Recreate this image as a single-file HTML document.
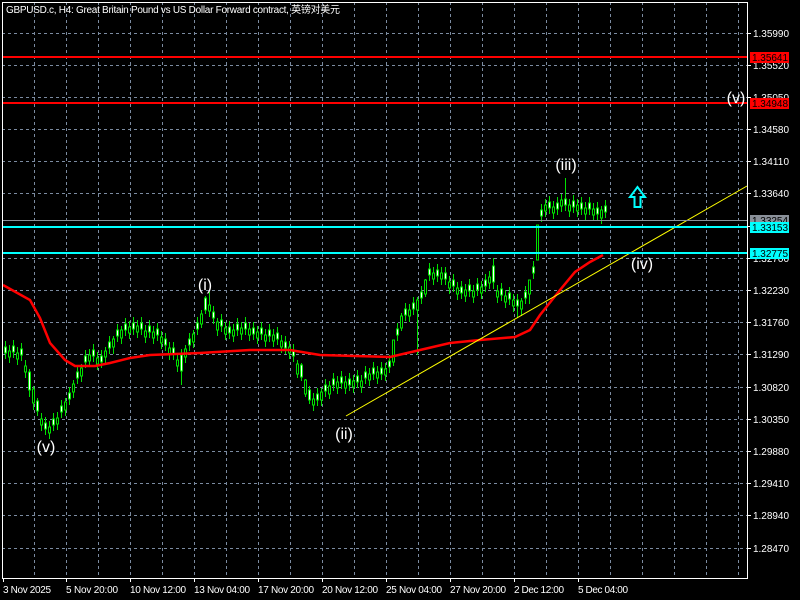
<!DOCTYPE html><html><head><meta charset="utf-8"><style>
html,body{margin:0;padding:0;background:#000;width:800px;height:600px;overflow:hidden}
svg{display:block}
text{font-family:"Liberation Sans","Noto Sans CJK SC",sans-serif}
</style></head><body>
<svg width="800" height="600" xmlns="http://www.w3.org/2000/svg">
<rect width="800" height="600" fill="#000"/>
<g stroke="#7b8ba0" stroke-dasharray="3,3" stroke-width="1">
<path d="M34.5,2V578M66.5,2V578M98.5,2V578M130.5,2V578M162.5,2V578M194.5,2V578M226.5,2V578M258.5,2V578M290.5,2V578M322.5,2V578M354.5,2V578M386.5,2V578M418.5,2V578M450.5,2V578M482.5,2V578M514.5,2V578M546.5,2V578M578.5,2V578M610.5,2V578M642.5,2V578M674.5,2V578M706.5,2V578M738.5,2V578"/>
<path d="M2,33.5H747M2,65.5H747M2,97.5H747M2,129.5H747M2,161.5H747M2,193.5H747M2,226.5H747M2,258.5H747M2,290.5H747M2,322.5H747M2,354.5H747M2,387.5H747M2,419.5H747M2,451.5H747M2,483.5H747M2,515.5H747M2,548.5H747"/>
</g>
<g stroke="#fff"><path d="M747,33.5h4M747,65.5h4M747,97.5h4M747,129.5h4M747,161.5h4M747,193.5h4M747,226.5h4M747,258.5h4M747,290.5h4M747,322.5h4M747,354.5h4M747,387.5h4M747,419.5h4M747,451.5h4M747,483.5h4M747,515.5h4M747,548.5h4M3.5,578v4M66.5,578v4M130.5,578v4M194.5,578v4M258.5,578v4M322.5,578v4M386.5,578v4M450.5,578v4M514.5,578v4M578.5,578v4"/></g>
<g fill="#fff" font-size="10" textLength="36">
<text x="753" y="37" textLength="36">1.35990</text><text x="753" y="69" textLength="36">1.35520</text><text x="753" y="101" textLength="36">1.35050</text><text x="753" y="133" textLength="36">1.34580</text><text x="753" y="165" textLength="36">1.34110</text><text x="753" y="197" textLength="36">1.33640</text><text x="753" y="230" textLength="36">1.33170</text><text x="753" y="262" textLength="36">1.32700</text><text x="753" y="294" textLength="36">1.32230</text><text x="753" y="326" textLength="36">1.31760</text><text x="753" y="358" textLength="36">1.31290</text><text x="753" y="391" textLength="36">1.30820</text><text x="753" y="423" textLength="36">1.30350</text><text x="753" y="455" textLength="36">1.29880</text><text x="753" y="487" textLength="36">1.29410</text><text x="753" y="519" textLength="36">1.28940</text><text x="753" y="552" textLength="36">1.28470</text>
</g>
<g fill="#fff" font-size="10">
<text x="3" y="593" textLength="48">3 Nov 2025</text><text x="66" y="593" textLength="52">5 Nov 20:00</text><text x="130" y="593" textLength="56">10 Nov 12:00</text><text x="194" y="593" textLength="56">13 Nov 04:00</text><text x="258" y="593" textLength="56">17 Nov 20:00</text><text x="322" y="593" textLength="56">20 Nov 12:00</text><text x="386" y="593" textLength="56">25 Nov 04:00</text><text x="450" y="593" textLength="56">27 Nov 20:00</text><text x="514" y="593" textLength="50">2 Dec 12:00</text><text x="578" y="593" textLength="50">5 Dec 04:00</text>
</g>
<g stroke="#00e000" stroke-width="1">
<path d="M5.5,341V359M9.5,345V363M13.5,340V358M17.5,347V365M21.5,343V361M25.5,360V378M29.5,369V397M33.5,386V410M37.5,398V416M41.5,413V431M45.5,417V435M49.5,421V439M53.5,413V431M57.5,412V430M61.5,400V418M65.5,398V416M69.5,387V405M73.5,380V398M77.5,366V384M81.5,364V382M85.5,350V368M89.5,349V367M93.5,344V362M97.5,352V370M101.5,350V368M105.5,347V365M109.5,336V354M113.5,336V354M117.5,324V342M121.5,326V344M125.5,318V336M129.5,321V339M133.5,317V335M137.5,320V338M141.5,317V335M145.5,325V343M149.5,320V338M153.5,326V344M157.5,323V341M161.5,331V349M165.5,333V351M169.5,342V360M173.5,342V360M177.5,354V372M181.5,349V385M185.5,345V363M189.5,333V351M193.5,330V348M197.5,317V335M201.5,310V328M205.5,296V314M209.5,292V317M213.5,306V324M217.5,318V336M221.5,314V332M225.5,322V340M229.5,321V339M233.5,324V342M237.5,318V336M241.5,322V340M245.5,317V335M249.5,323V341M253.5,322V340M257.5,326V344M261.5,322V340M265.5,329V347M269.5,324V342M273.5,329V347M277.5,327V345M281.5,335V353M285.5,336V354M289.5,341V359M293.5,344V362M297.5,360V378M301.5,363V381M305.5,379V397M309.5,386V404M313.5,393V411M317.5,388V406M321.5,388V406M325.5,379V397M329.5,381V399M333.5,373V391M337.5,376V394M341.5,371V389M345.5,376V394M349.5,373V391M353.5,375V393M357.5,370V388M361.5,375V393M365.5,366V384M369.5,368V386M373.5,362V380M377.5,366V384M381.5,362V380M385.5,363V381M389.5,355V373M393.5,348V366M397.5,323V341M401.5,313V331M405.5,303V321M409.5,304V322M413.5,297V315M417.5,297V355M421.5,286V304M425.5,279V297M429.5,263V281M433.5,267V285M437.5,264V282M441.5,267V285M445.5,267V285M449.5,276V294M453.5,274V292M457.5,282V300M461.5,281V299M465.5,284V302M469.5,279V297M473.5,285V303M477.5,278V296M481.5,281V299M485.5,274V292M489.5,271V289M493.5,258V289M497.5,285V303M501.5,283V301M505.5,290V308M509.5,287V305M513.5,294V312M517.5,294V318M521.5,298V316M525.5,286V304M529.5,286V304M533.5,261V279M537.5,237V255M541.5,204V222M545.5,199V217M549.5,196V214M553.5,201V219M557.5,197V215M561.5,194V212M565.5,178V211M569.5,199V217M573.5,195V213M577.5,199V217M581.5,197V215M585.5,202V220M589.5,197V215M593.5,203V221M597.5,202V220M601.5,206V224M605.5,200V218"/>
<path fill="#fff" d="M4.5,347h2v6h-2zM12.5,346h2v6h-2zM20.5,349h2v6h-2zM28.5,372h2v18h-2zM36.5,401h2v10h-2zM44.5,423h2v6h-2zM52.5,419h2v6h-2zM60.5,406h2v6h-2zM68.5,393h2v6h-2zM76.5,372h2v6h-2zM84.5,356h2v6h-2zM92.5,350h2v6h-2zM100.5,356h2v6h-2zM108.5,342h2v6h-2zM116.5,330h2v6h-2zM124.5,324h2v6h-2zM132.5,323h2v6h-2zM140.5,323h2v6h-2zM148.5,326h2v6h-2zM156.5,329h2v6h-2zM164.5,339h2v6h-2zM172.5,348h2v6h-2zM180.5,355h2v16h-2zM188.5,339h2v6h-2zM196.5,323h2v6h-2zM204.5,298h2v12h-2zM212.5,312h2v6h-2zM220.5,320h2v6h-2zM228.5,327h2v6h-2zM236.5,324h2v6h-2zM244.5,323h2v6h-2zM252.5,328h2v6h-2zM260.5,328h2v6h-2zM268.5,330h2v6h-2zM276.5,333h2v6h-2zM284.5,342h2v6h-2zM292.5,350h2v6h-2zM300.5,365h2v12h-2zM308.5,390h2v10h-2zM316.5,394h2v6h-2zM324.5,385h2v6h-2zM332.5,379h2v6h-2zM340.5,377h2v6h-2zM348.5,379h2v6h-2zM356.5,376h2v6h-2zM364.5,372h2v6h-2zM372.5,368h2v6h-2zM380.5,368h2v6h-2zM388.5,361h2v6h-2zM396.5,329h2v6h-2zM404.5,309h2v6h-2zM412.5,303h2v6h-2zM420.5,292h2v6h-2zM428.5,269h2v6h-2zM436.5,270h2v6h-2zM444.5,273h2v6h-2zM452.5,280h2v6h-2zM460.5,287h2v6h-2zM468.5,285h2v6h-2zM476.5,284h2v6h-2zM484.5,280h2v6h-2zM492.5,266h2v16h-2zM500.5,289h2v6h-2zM508.5,293h2v6h-2zM516.5,300h2v6h-2zM524.5,292h2v6h-2zM532.5,267h2v6h-2zM540.5,210h2v6h-2zM548.5,202h2v6h-2zM556.5,203h2v6h-2zM564.5,199h2v6h-2zM572.5,201h2v6h-2zM580.5,203h2v6h-2zM588.5,203h2v6h-2zM596.5,208h2v6h-2zM604.5,206h2v6h-2z"/>
<path fill="#000" d="M8.5,351h2v6h-2zM16.5,353h2v6h-2zM24.5,366h2v6h-2zM32.5,389h2v14h-2zM40.5,419h2v6h-2zM48.5,427h2v6h-2zM56.5,418h2v6h-2zM64.5,402h2v8h-2zM72.5,384h2v8h-2zM80.5,368h2v8h-2zM88.5,355h2v6h-2zM96.5,358h2v6h-2zM104.5,351h2v6h-2zM112.5,339h2v8h-2zM120.5,330h2v8h-2zM128.5,327h2v6h-2zM136.5,326h2v6h-2zM144.5,331h2v6h-2zM152.5,332h2v6h-2zM160.5,337h2v6h-2zM168.5,348h2v6h-2zM176.5,360h2v6h-2zM184.5,349h2v8h-2zM192.5,334h2v8h-2zM200.5,314h2v10h-2zM208.5,305h2v6h-2zM216.5,322h2v8h-2zM224.5,328h2v6h-2zM232.5,330h2v6h-2zM240.5,328h2v6h-2zM248.5,329h2v6h-2zM256.5,332h2v6h-2zM264.5,335h2v6h-2zM272.5,335h2v6h-2zM280.5,341h2v6h-2zM288.5,347h2v6h-2zM296.5,364h2v10h-2zM304.5,380h2v14h-2zM312.5,399h2v6h-2zM320.5,392h2v8h-2zM328.5,386h2v8h-2zM336.5,382h2v6h-2zM344.5,382h2v6h-2zM352.5,381h2v6h-2zM360.5,381h2v6h-2zM368.5,374h2v6h-2zM376.5,372h2v6h-2zM384.5,369h2v6h-2zM392.5,340h2v22h-2zM400.5,316h2v12h-2zM408.5,310h2v6h-2zM416.5,300h2v10h-2zM424.5,280h2v14h-2zM432.5,273h2v6h-2zM440.5,273h2v6h-2zM448.5,282h2v6h-2zM456.5,288h2v6h-2zM464.5,290h2v6h-2zM472.5,291h2v6h-2zM480.5,287h2v6h-2zM488.5,277h2v6h-2zM496.5,291h2v6h-2zM504.5,296h2v6h-2zM512.5,300h2v6h-2zM520.5,301h2v8h-2zM528.5,280h2v14h-2zM536.5,225h2v35h-2zM544.5,205h2v6h-2zM552.5,207h2v6h-2zM560.5,200h2v6h-2zM568.5,205h2v6h-2zM576.5,205h2v6h-2zM584.5,208h2v6h-2zM592.5,209h2v6h-2zM600.5,210h2v8h-2z"/>
</g>
<polyline fill="none" stroke="#f00" stroke-width="2.5" points="3,285 30,300 40,318 50,343 65,360 75,366 95,366 110,363 130,358 150,355 200,353 250,350 290,350 320,355 390,357 420,350 450,343 480,340 515,337 530,330 540,315 560,290 575,272 590,262 603,255"/>
<line x1="346" y1="416" x2="747" y2="186" stroke="#ff0" stroke-width="1"/>
<line x1="2" y1="57" x2="747" y2="57" stroke="#f00" stroke-width="2"/>
<line x1="2" y1="103" x2="747" y2="103" stroke="#f00" stroke-width="2"/>
<line x1="2" y1="220.5" x2="747" y2="220.5" stroke="#8a9099"/>
<line x1="2" y1="227" x2="747" y2="227" stroke="#0ff" stroke-width="2"/>
<line x1="2" y1="253" x2="747" y2="253" stroke="#0ff" stroke-width="2"/>
<rect x="750" y="52" width="39" height="11" fill="#f00"/><text x="752" y="61" font-size="10" fill="#000" textLength="36">1.35641</text>
<rect x="750" y="98" width="39" height="11" fill="#f00"/><text x="752" y="107" font-size="10" fill="#000" textLength="36">1.34948</text>
<rect x="750" y="215" width="39" height="11" fill="#8a9099"/><text x="752" y="224" font-size="10" fill="#000" textLength="36">1.33254</text>
<rect x="750" y="222" width="39" height="11" fill="#0ff"/><text x="752" y="231" font-size="10" fill="#000" textLength="36">1.33153</text>
<rect x="750" y="248" width="39" height="11" fill="#0ff"/><text x="752" y="257" font-size="10" fill="#000" textLength="36">1.32775</text>
<rect x="2.5" y="2.5" width="745" height="576" fill="none" stroke="#fff"/>
<g fill="#fff" font-size="16" text-anchor="middle">
<text x="736" y="103">(v)</text><text x="566" y="170">(iii)</text><text x="642" y="269">(iv)</text><text x="205" y="290">(i)</text><text x="344" y="439">(ii)</text><text x="46" y="452">(v)</text>
</g>
<path d="M637.5,187 L630,197 L634.5,197 L634.5,207 L640.5,207 L640.5,197 L645,197 Z" fill="none" stroke="#0ff" stroke-width="2"/>
<text x="6" y="13" fill="#fff" font-size="10" textLength="334">GBPUSD.c, H4:  Great Britain Pound vs US Dollar Forward contract, 英镑对美元</text>
</svg>
</body></html>
